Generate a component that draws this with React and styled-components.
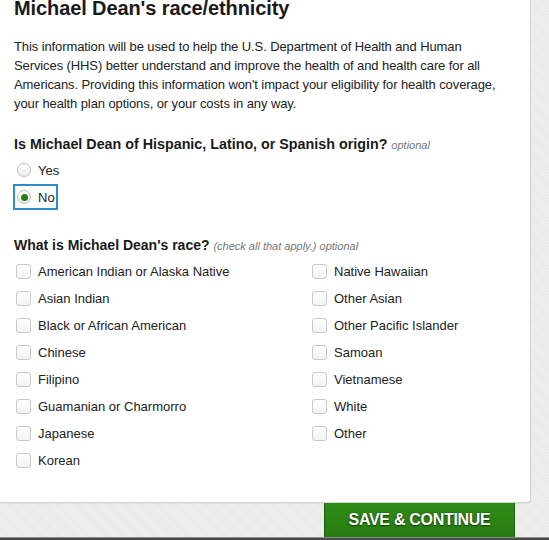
import React from "react";
import styled, { createGlobalStyle } from "styled-components";

const Global = createGlobalStyle`
  html, body { margin: 0; padding: 0; }
  body {
    font-family: "Liberation Sans", Arial, Helvetica, sans-serif;
    color: #222;
    background: #ececec;
  }
`;

const Page = styled.div`
  width: 549px;
  height: 540px;
  overflow: hidden;
  display: flex;
  flex-direction: column;
  background-color: #ececec;
  background-image: repeating-linear-gradient(
    45deg,
    rgba(255, 255, 255, 0.18) 0 1px,
    rgba(0, 0, 0, 0.01) 1px 2px
  );
`;

const Card = styled.section`
  width: 531px;
  box-sizing: border-box;
  background: #fff;
  border-right: 1px solid #d4d4d4;
  border-bottom: 1px solid #d4d4d4;
  border-bottom-right-radius: 4px;
  box-shadow: 0 1px 1px rgba(0, 0, 0, 0.06);
  padding: 0 14px 28px 14px;
`;

const Title = styled.h1`
  margin: -2px 0 0 0;
  font-size: 20px;
  line-height: 20px;
  font-weight: bold;
  color: #1a1a1a;
  letter-spacing: -0.1px;
`;

const Intro = styled.p`
  margin: 19px 0 0 0;
  width: 486px;
  font-size: 13px;
  line-height: 19px;
  letter-spacing: -0.1px;
  color: #222;
`;

const Question = styled.h2`
  margin: ${(p) => p.$top}px 0 0 0;
  font-size: ${(p) => p.$size || 14}px;
  line-height: 18px;
  font-weight: bold;
  color: #1a1a1a;
`;

const Hint = styled.span`
  font-size: 11px;
  font-weight: normal;
  font-style: italic;
  color: #777;
`;

const RadioList = styled.div`
  display: flex;
  flex-direction: column;
  gap: 1px;
  margin-top: 3px;
`;

const RadioLabel = styled.label`
  display: inline-flex;
  align-self: flex-start;
  align-items: center;
  gap: 7px;
  height: 22px;
  padding: 0 1px 0 2px;
  margin-left: -1px;
  font-size: 13px;
  color: #222;
  border: 2px solid ${(p) => (p.$focused ? "#2b8dcf" : "transparent")};
`;

const RadioCircle = styled.span`
  width: 14px;
  height: 14px;
  box-sizing: border-box;
  border-radius: 50%;
  border: 1px solid #bcbcbc;
  background: linear-gradient(#ffffff, #ececec);
  display: flex;
  align-items: center;
  justify-content: center;
  &::after {
    content: "";
    display: ${(p) => (p.$checked ? "block" : "none")};
    width: 7px;
    height: 7px;
    border-radius: 50%;
    background: #2b7d12;
  }
`;

const CheckGrid = styled.div`
  display: grid;
  grid-template-columns: 296px 1fr;
  grid-template-rows: repeat(8, 27px);
  grid-auto-flow: column;
  margin-top: 3px;
  padding-left: 2px;
`;

const CheckLabel = styled.label`
  display: flex;
  align-items: center;
  gap: 7px;
  font-size: 13px;
  color: #222;
`;

const CheckBox = styled.span`
  width: 15px;
  height: 15px;
  box-sizing: border-box;
  border: 1px solid #c9c9c9;
  border-radius: 3px;
  background: linear-gradient(#ffffff, #f3f3f3);
`;

const Footer = styled.div`
  display: flex;
  justify-content: flex-end;
  padding-right: 34px;
`;

const SaveButton = styled.button`
  width: 191px;
  height: 34px;
  border: none;
  border-left: 1px solid #1d5e0c;
  border-right: 1px solid #1d5e0c;
  background: linear-gradient(#2f8c17, #267b10);
  color: #fff;
  font-family: "Liberation Sans", Arial, sans-serif;
  font-weight: bold;
  font-size: 16px;
  letter-spacing: -0.3px;
  text-shadow: 0 0 2px #13400a, 0 1px 1px #13400a;
  cursor: pointer;
  padding: 0;
`;

const BottomBar = styled.div`
  height: 3px;
  background: #4a4a4a;
  border-top: 1px solid #8a8a8a;
`;

const leftRaces = [
  "American Indian or Alaska Native",
  "Asian Indian",
  "Black or African American",
  "Chinese",
  "Filipino",
  "Guamanian or Charmorro",
  "Japanese",
  "Korean",
];
const rightRaces = [
  "Native Hawaiian",
  "Other Asian",
  "Other Pacific Islander",
  "Samoan",
  "Vietnamese",
  "White",
  "Other",
];

export default function App() {
  return (
    <>
      <Global />
      <Page>
        <Card>
          <Title>Michael Dean's race/ethnicity</Title>
          <Intro>
            This information will be used to help the U.S. Department of Health
            and Human Services (HHS) better understand and improve the health of
            and health care for all Americans. Providing this information won't
            impact your eligibility for health coverage, your health plan
            options, or your costs in any way.
          </Intro>
          <Question $top={22} $size={14.3}>
            Is Michael Dean of Hispanic, Latino, or Spanish origin?{" "}
            <Hint>optional</Hint>
          </Question>
          <RadioList>
            <RadioLabel>
              <RadioCircle />
              Yes
            </RadioLabel>
            <RadioLabel $focused>
              <RadioCircle $checked />
              No
            </RadioLabel>
          </RadioList>
          <Question $top={26}>
            What is Michael Dean's race? <Hint>(check all that apply.) optional</Hint>
          </Question>
          <CheckGrid>
            {[...leftRaces, ...rightRaces].map((r) => (
              <CheckLabel key={r}>
                <CheckBox />
                {r}
              </CheckLabel>
            ))}
          </CheckGrid>
        </Card>
        <Footer>
          <SaveButton>SAVE &amp; CONTINUE</SaveButton>
        </Footer>
        <BottomBar />
      </Page>
    </>
  );
}
